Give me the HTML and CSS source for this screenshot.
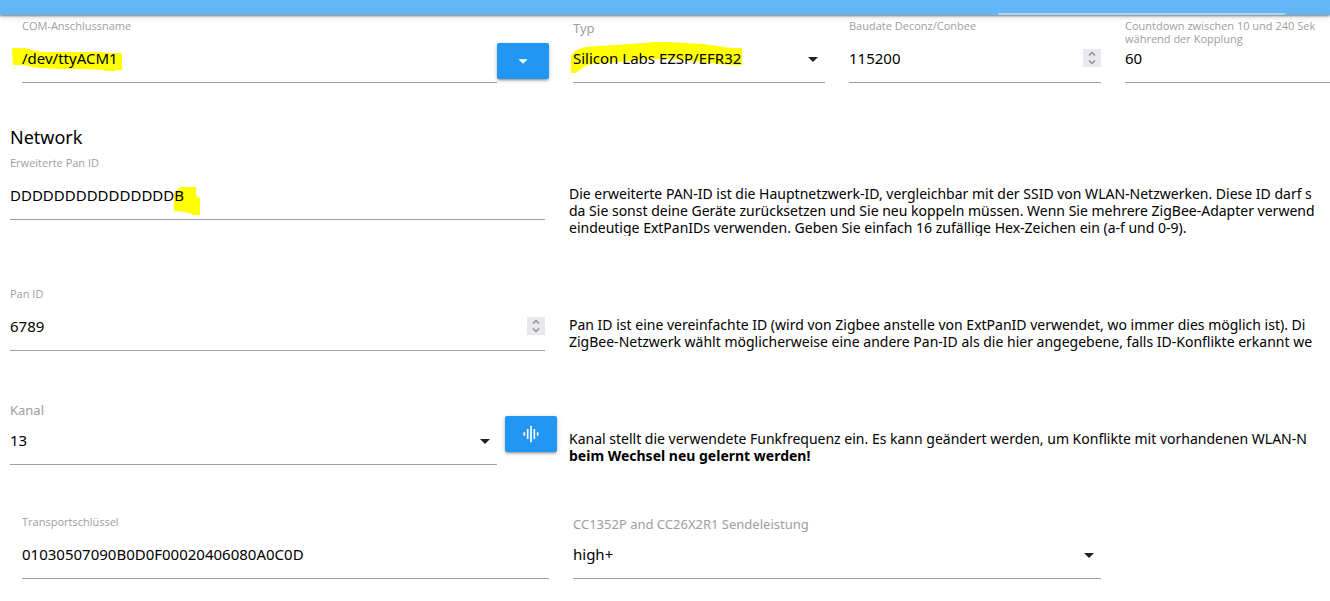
FILE: index.html
```html
<!DOCTYPE html>
<html lang="de">
<head>
<meta charset="utf-8">
<meta name="viewport" content="width=device-width, initial-scale=1">
<title>Zigbee</title>
<link rel="stylesheet" href="styles.css">
</head>
<body>
<header class="tabs"><span class="tab-indicator"></span></header>
<main class="settings">
  <div class="row row-connection">
    <div class="with-button">
      <div class="field">
        <label class="label" for="port">COM-Anschlussname</label>
        <svg class="marker marker-port" width="111" height="24" viewBox="0 0 111 24" aria-hidden="true"><path d="M0 0H13L20 2L30 4H87L98 5H110V22H104V23H92V22L73 21H46L28 20L20 19L12 17H1Z"/></svg>
        <input class="control" id="port" type="text" value="/dev/ttyACM1">
      </div>
      <button class="btn" type="button" aria-label="Port"><svg width="22" height="22" viewBox="0 0 24 24" aria-hidden="true"><path d="M7 10l5 5 5-5z"/></svg></button>
    </div>
    <div class="field">
      <label class="label label-select" for="type">Typ</label>
      <svg class="marker marker-type" width="172" height="31" viewBox="0 0 172 31" aria-hidden="true"><path d="M0 14Q2 8 14 5L28 4L60 2L84 0H98L132 2L160 6H171V23H160L150 22L130 20L100 17H82L60 19L30 21L16 23L7 29L5 31H0Z"/></svg>
      <div class="control-box">
        <select class="control" id="type"><option>Silicon Labs EZSP/EFR32</option></select>
        <svg class="caret" width="24" height="24" viewBox="0 0 24 24" aria-hidden="true"><path d="M7 10l5 5 5-5z"/></svg>
      </div>
    </div>
    <div class="field">
      <label class="label" for="baud">Baudate Deconz/Conbee</label>
      <div class="control-box">
        <input class="control" id="baud" type="number" value="115200">
        <svg class="spinner" width="18" height="18" viewBox="0 0 18 18" aria-hidden="true"><path d="M6 6.500l3-3 3 3M6 11.500l3 3 3-3"/></svg>
      </div>
    </div>
    <div class="field">
      <label class="label" for="countdown">Countdown zwischen 10 und 240 Sek<br>während der Kopplung</label>
      <input class="control" id="countdown" type="number" value="60">
    </div>
  </div>

  <h2 class="heading">Network</h2>

  <div class="row row-described">
    <div class="field">
      <label class="label" for="extpan">Erweiterte Pan ID</label>
      <svg class="marker marker-extpan" width="26" height="28" viewBox="0 0 26 28" aria-hidden="true"><path d="M6 0H22V9L26 11V28H18V27L11 25L0 24V6Z"/></svg>
      <input class="control" id="extpan" type="text" value="DDDDDDDDDDDDDDDB">
    </div>
    <p class="description">Die erweiterte PAN-ID ist die Hauptnetzwerk-ID, vergleichbar mit der SSID von WLAN-Netzwerken. Diese ID darf s<br>da Sie sonst deine Geräte zurücksetzen und Sie neu koppeln müssen. Wenn Sie mehrere ZigBee-Adapter verwend<br>eindeutige ExtPanIDs verwenden. Geben Sie einfach 16 zufällige Hex-Zeichen ein (a-f und 0-9).</p>
  </div>

  <div class="row row-described row-pan">
    <div class="field">
      <label class="label" for="pan">Pan ID</label>
      <div class="control-box">
        <input class="control" id="pan" type="number" value="6789">
        <svg class="spinner" width="18" height="18" viewBox="0 0 18 18" aria-hidden="true"><path d="M6 6.500l3-3 3 3M6 11.500l3 3 3-3"/></svg>
      </div>
    </div>
    <p class="description">Pan ID ist eine vereinfachte ID (wird von Zigbee anstelle von ExtPanID verwendet, wo immer dies möglich ist). Di<br>ZigBee-Netzwerk wählt möglicherweise eine andere Pan-ID als die hier angegebene, falls ID-Konflikte erkannt we</p>
  </div>

  <div class="row row-channel">
    <div class="with-button with-button-spaced">
      <div class="field">
        <label class="label label-select" for="channel">Kanal</label>
        <div class="control-box">
          <select class="control" id="channel"><option>13</option></select>
          <svg class="caret" width="24" height="24" viewBox="0 0 24 24" aria-hidden="true"><path d="M7 10l5 5 5-5z"/></svg>
        </div>
      </div>
      <button class="btn" type="button" aria-label="Kanal"><svg width="20" height="20" viewBox="0 0 24 24" aria-hidden="true"><path d="M7 18h2V6H7v12zm4 4h2V2h-2v20zm-8-8h2v-4H3v4zm12 4h2V6h-2v12zm4-8v4h2v-4h-2z"/></svg></button>
    </div>
    <p class="description">Kanal stellt die verwendete Funkfrequenz ein. Es kann geändert werden, um Konflikte mit vorhandenen WLAN-N<br><b>beim Wechsel neu gelernt werden!</b></p>
  </div>

  <div class="row row-transport">
    <div class="field">
      <label class="label" for="key">Transportschlüssel</label>
      <input class="control" id="key" type="text" value="01030507090B0D0F00020406080A0C0D">
    </div>
    <div class="field">
      <label class="label label-select" for="power">CC1352P and CC26X2R1 Sendeleistung</label>
      <div class="control-box">
        <select class="control" id="power"><option>high+</option></select>
        <svg class="caret" width="24" height="24" viewBox="0 0 24 24" aria-hidden="true"><path d="M7 10l5 5 5-5z"/></svg>
      </div>
    </div>
  </div>
</main>
</body>
</html>
```
FILE: styles.css
```css
* { box-sizing: border-box; }

body {
  margin: 0;
  background: #fff;
  color: #000;
  font-family: "Noto Sans", "Open Sans", sans-serif;
  font-size: 14px;
  overflow-x: hidden;
}

.tabs {
  display: flex;
  align-items: flex-end;
  justify-content: flex-end;
  height: 15px;
  padding: 0 45px 1px 0;
  background: #64b5f6;
  box-shadow: 0 1px 2px rgba(0, 0, 0, .45), 0 2px 6px rgba(0, 0, 0, .15);
}

.tab-indicator {
  width: 287px;
  height: 2px;
  margin-bottom: -1px;
  background: #a5d5fa;
}

.settings { padding: 5px 0 22px; }

.row { display: grid; column-gap: 24px; margin-bottom: 51px; }
.row-connection { grid-template-columns: 527fr 252fr 252fr 205fr; padding-left: 22px; margin-bottom: 42px; }
.row-described { grid-template-columns: 535fr 761fr; padding-left: 10px; }
.row-described:not(.row-pan) { margin-bottom: 52px; }
.row-channel { grid-template-columns: 547fr 761fr; column-gap: 12px; padding-left: 10px; }
.row-transport { grid-template-columns: 527fr 528fr 205fr; padding-left: 22px; margin-bottom: 0; }

.field { position: relative; flex: 1; min-width: 0; }

.label {
  display: block;
  height: 16px;
  margin-top: -1px;
  color: #9e9e9e;
  font-family: "Open Sans", "Noto Sans", sans-serif;
  font-size: 11px;
  line-height: 13px;
  white-space: nowrap;
}

.label-select {
  font-family: "Noto Sans", "Open Sans", sans-serif;
  font-size: 13px;
  line-height: 19px;
}

.control-box { position: relative; }

.control {
  position: relative;
  display: block;
  width: 100%;
  height: 48px;
  margin: 0;
  padding: 0 0 1px;
  border: 0;
  border-bottom: 1px solid #9e9e9e;
  border-radius: 0;
  outline: 0;
  appearance: none;
  background: transparent;
  color: #000;
  font-family: inherit;
  font-size: 15px;
}

.control[type="number"] { appearance: textfield; }
.control::-webkit-inner-spin-button { appearance: none; margin: 0; }

.caret { position: absolute; top: 12px; right: 0; fill: #212121; pointer-events: none; }

.spinner {
  position: absolute;
  top: 14px;
  right: 0;
  background: #e9e9ed;
  fill: none;
  stroke: #8f8f9d;
  stroke-width: 1.5;
  pointer-events: none;
}

.marker { position: absolute; fill: #ff0; }
.marker-port { top: 28px; left: -10px; }
.marker-type { top: 22px; left: -2px; }
.marker-extpan { top: 30px; left: 164px; }

.with-button { display: flex; align-items: flex-end; }
.with-button .btn { margin-bottom: 4px; }
.with-button-spaced { align-items: flex-start; gap: 8px; }
.with-button-spaced .btn { margin: 14px 0 0; }

.btn {
  display: flex;
  align-items: center;
  justify-content: center;
  width: 52px;
  height: 36px;
  padding: 0;
  border: 0;
  border-radius: 2px;
  background: #2196f3;
  box-shadow: 0 2px 2px rgba(0, 0, 0, .14), 0 3px 1px -2px rgba(0, 0, 0, .12), 0 1px 5px rgba(0, 0, 0, .2);
}

.btn svg { fill: #fff; }

.heading { margin: 0 0 8px; padding-left: 10px; font-size: 18px; font-weight: 400; line-height: 24px; }

.description {
  min-width: 0;
  height: 79px;
  margin: 0;
  padding-top: 28px;
  overflow: hidden;
  line-height: 17px;
  white-space: nowrap;
}

.row-pan .description, .row-channel .description { height: 63px; }
```
